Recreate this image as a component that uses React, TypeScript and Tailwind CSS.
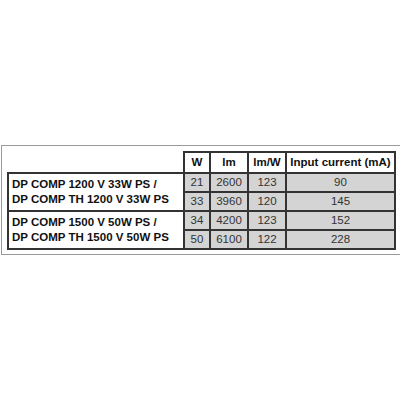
const rows = [
  { name: ["DP COMP 1200 V 33W PS /", "DP COMP TH 1200 V 33W PS"], data: [["21", "2600", "123", "90"], ["33", "3960", "120", "145"]] },
  { name: ["DP COMP 1500 V 50W PS /", "DP COMP TH 1500 V 50W PS"], data: [["34", "4200", "123", "152"], ["50", "6100", "122", "228"]] },
];

const headers = ["W", "lm", "lm/W", "Input current (mA)"];

export default function App() {
  return (
    <div className="w-[400px] h-[400px] bg-white pt-[145px] font-['Liberation_Sans',Arial,sans-serif]">
      <div className="ml-px w-[399px] h-[110px] border-y border-l border-[#9a9a9a] pl-[5px] pt-[5px]">
        <table className="border-collapse table-fixed w-[387px] text-[11.5px] leading-[15px]">
          <colgroup>
            <col className="w-[176px]" />
            <col className="w-[26px]" />
            <col className="w-[38px]" />
            <col className="w-[38px]" />
            <col className="w-[109px]" />
          </colgroup>
          <thead>
            <tr className="h-[21px]">
              <th className="p-0" />
              {headers.map((h) => (
                <th key={h} className="p-0 border-2 border-[#333] font-bold text-[#111] text-center">{h}</th>
              ))}
            </tr>
          </thead>
          <tbody>
            {rows.map((g) =>
              g.data.map((d, i) => (
                <tr key={g.name[0] + i} className="h-[19px]">
                  {i === 0 && (
                    <td rowSpan={2} className="p-0 pl-[3px] border-2 border-[#333] font-bold text-[#111] align-middle">
                      {g.name[0]}
                      <br />
                      {g.name[1]}
                    </td>
                  )}
                  {d.map((v, j) => (
                    <td key={j} className="p-0 border-2 border-[#333] bg-[#d4d4d4] text-[#333] text-center">{v}</td>
                  ))}
                </tr>
              ))
            )}
          </tbody>
        </table>
      </div>
    </div>
  );
}
